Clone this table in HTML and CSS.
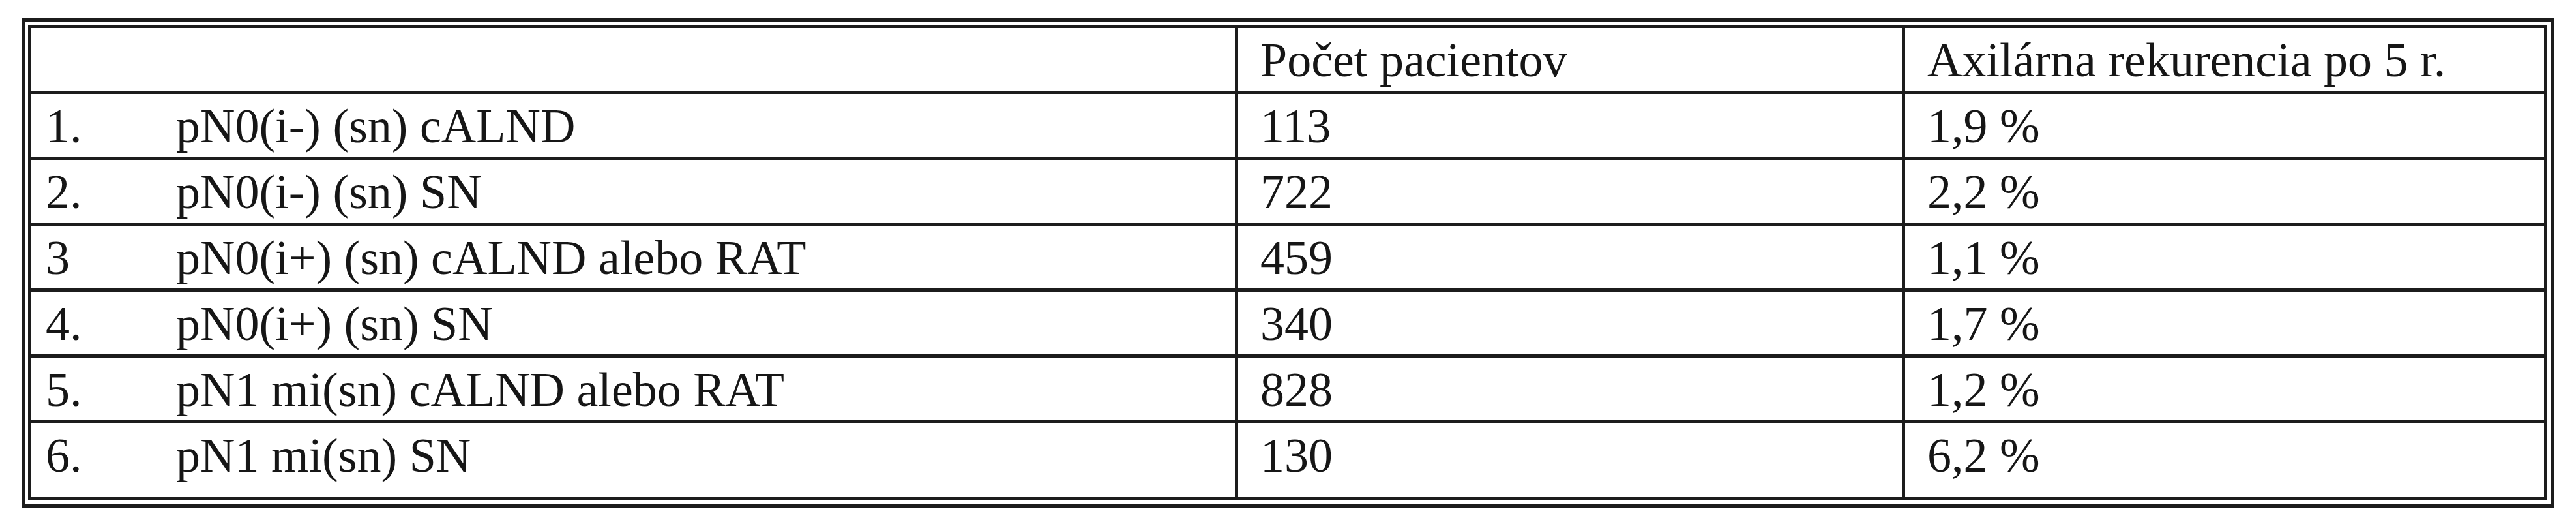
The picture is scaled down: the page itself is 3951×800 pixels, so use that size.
FILE: index.html
```html
<!DOCTYPE html>
<html lang="sk">
<head>
<meta charset="utf-8">
<title>Axilárna rekurencia</title>
<link rel="stylesheet" href="styles.css">
</head>
<body>
<div class="frame">
  <table class="data">
    <tr>
      <td class="c1"></td>
      <td class="c2">Počet pacientov</td>
      <td class="c3">Axilárna rekurencia po 5 r.</td>
    </tr>
    <tr>
      <td class="c1"><span class="num">1.</span>pN0(i-) (sn) cALND</td>
      <td class="c2">113</td>
      <td class="c3">1,9 %</td>
    </tr>
    <tr>
      <td class="c1"><span class="num">2.</span>pN0(i-) (sn) SN</td>
      <td class="c2">722</td>
      <td class="c3">2,2 %</td>
    </tr>
    <tr>
      <td class="c1"><span class="num">3</span>pN0(i+) (sn) cALND alebo RAT</td>
      <td class="c2">459</td>
      <td class="c3">1,1 %</td>
    </tr>
    <tr>
      <td class="c1"><span class="num">4.</span>pN0(i+) (sn) SN</td>
      <td class="c2">340</td>
      <td class="c3">1,7 %</td>
    </tr>
    <tr>
      <td class="c1"><span class="num">5.</span>pN1 mi(sn) cALND alebo RAT</td>
      <td class="c2">828</td>
      <td class="c3">1,2 %</td>
    </tr>
    <tr class="last">
      <td class="c1"><span class="num">6.</span>pN1 mi(sn) SN</td>
      <td class="c2">130</td>
      <td class="c3">6,2 %</td>
    </tr>
  </table>
</div>
</body>
</html>
```
FILE: styles.css
```css
html, body {
  margin: 0;
  padding: 0;
  background: #ffffff;
}

body {
  font-family: "Liberation Serif", "Times New Roman", serif;
  font-size: 74px;
  line-height: 85px;
  color: #161616;
}

.frame {
  box-sizing: border-box;
  width: 3885px;
  margin: 28px 0 0 33px;
  border: 5px solid #1c1c1c;
  padding: 5px 6px 6px 5px;
}

.data {
  box-sizing: border-box;
  width: 3864px;
  table-layout: fixed;
  border-collapse: separate;
  border-spacing: 0;
  border: 5px solid #1c1c1c;
}

.data td {
  box-sizing: border-box;
  height: 101px;
  padding: 7px 0 4px 34px;
  border-bottom: 5px solid #1c1c1c;
  border-right: 5px solid #1c1c1c;
  vertical-align: top;
  white-space: nowrap;
}

.data td.c1 {
  width: 1851px;
  padding-left: 22px;
}

.data td.c2 {
  width: 1023px;
}

.data td.c3 {
  width: 980px;
  border-right: none;
}

.data tr.last td {
  height: 113px;
  border-bottom: none;
}

.num {
  display: inline-block;
  width: 200px;
}
```
